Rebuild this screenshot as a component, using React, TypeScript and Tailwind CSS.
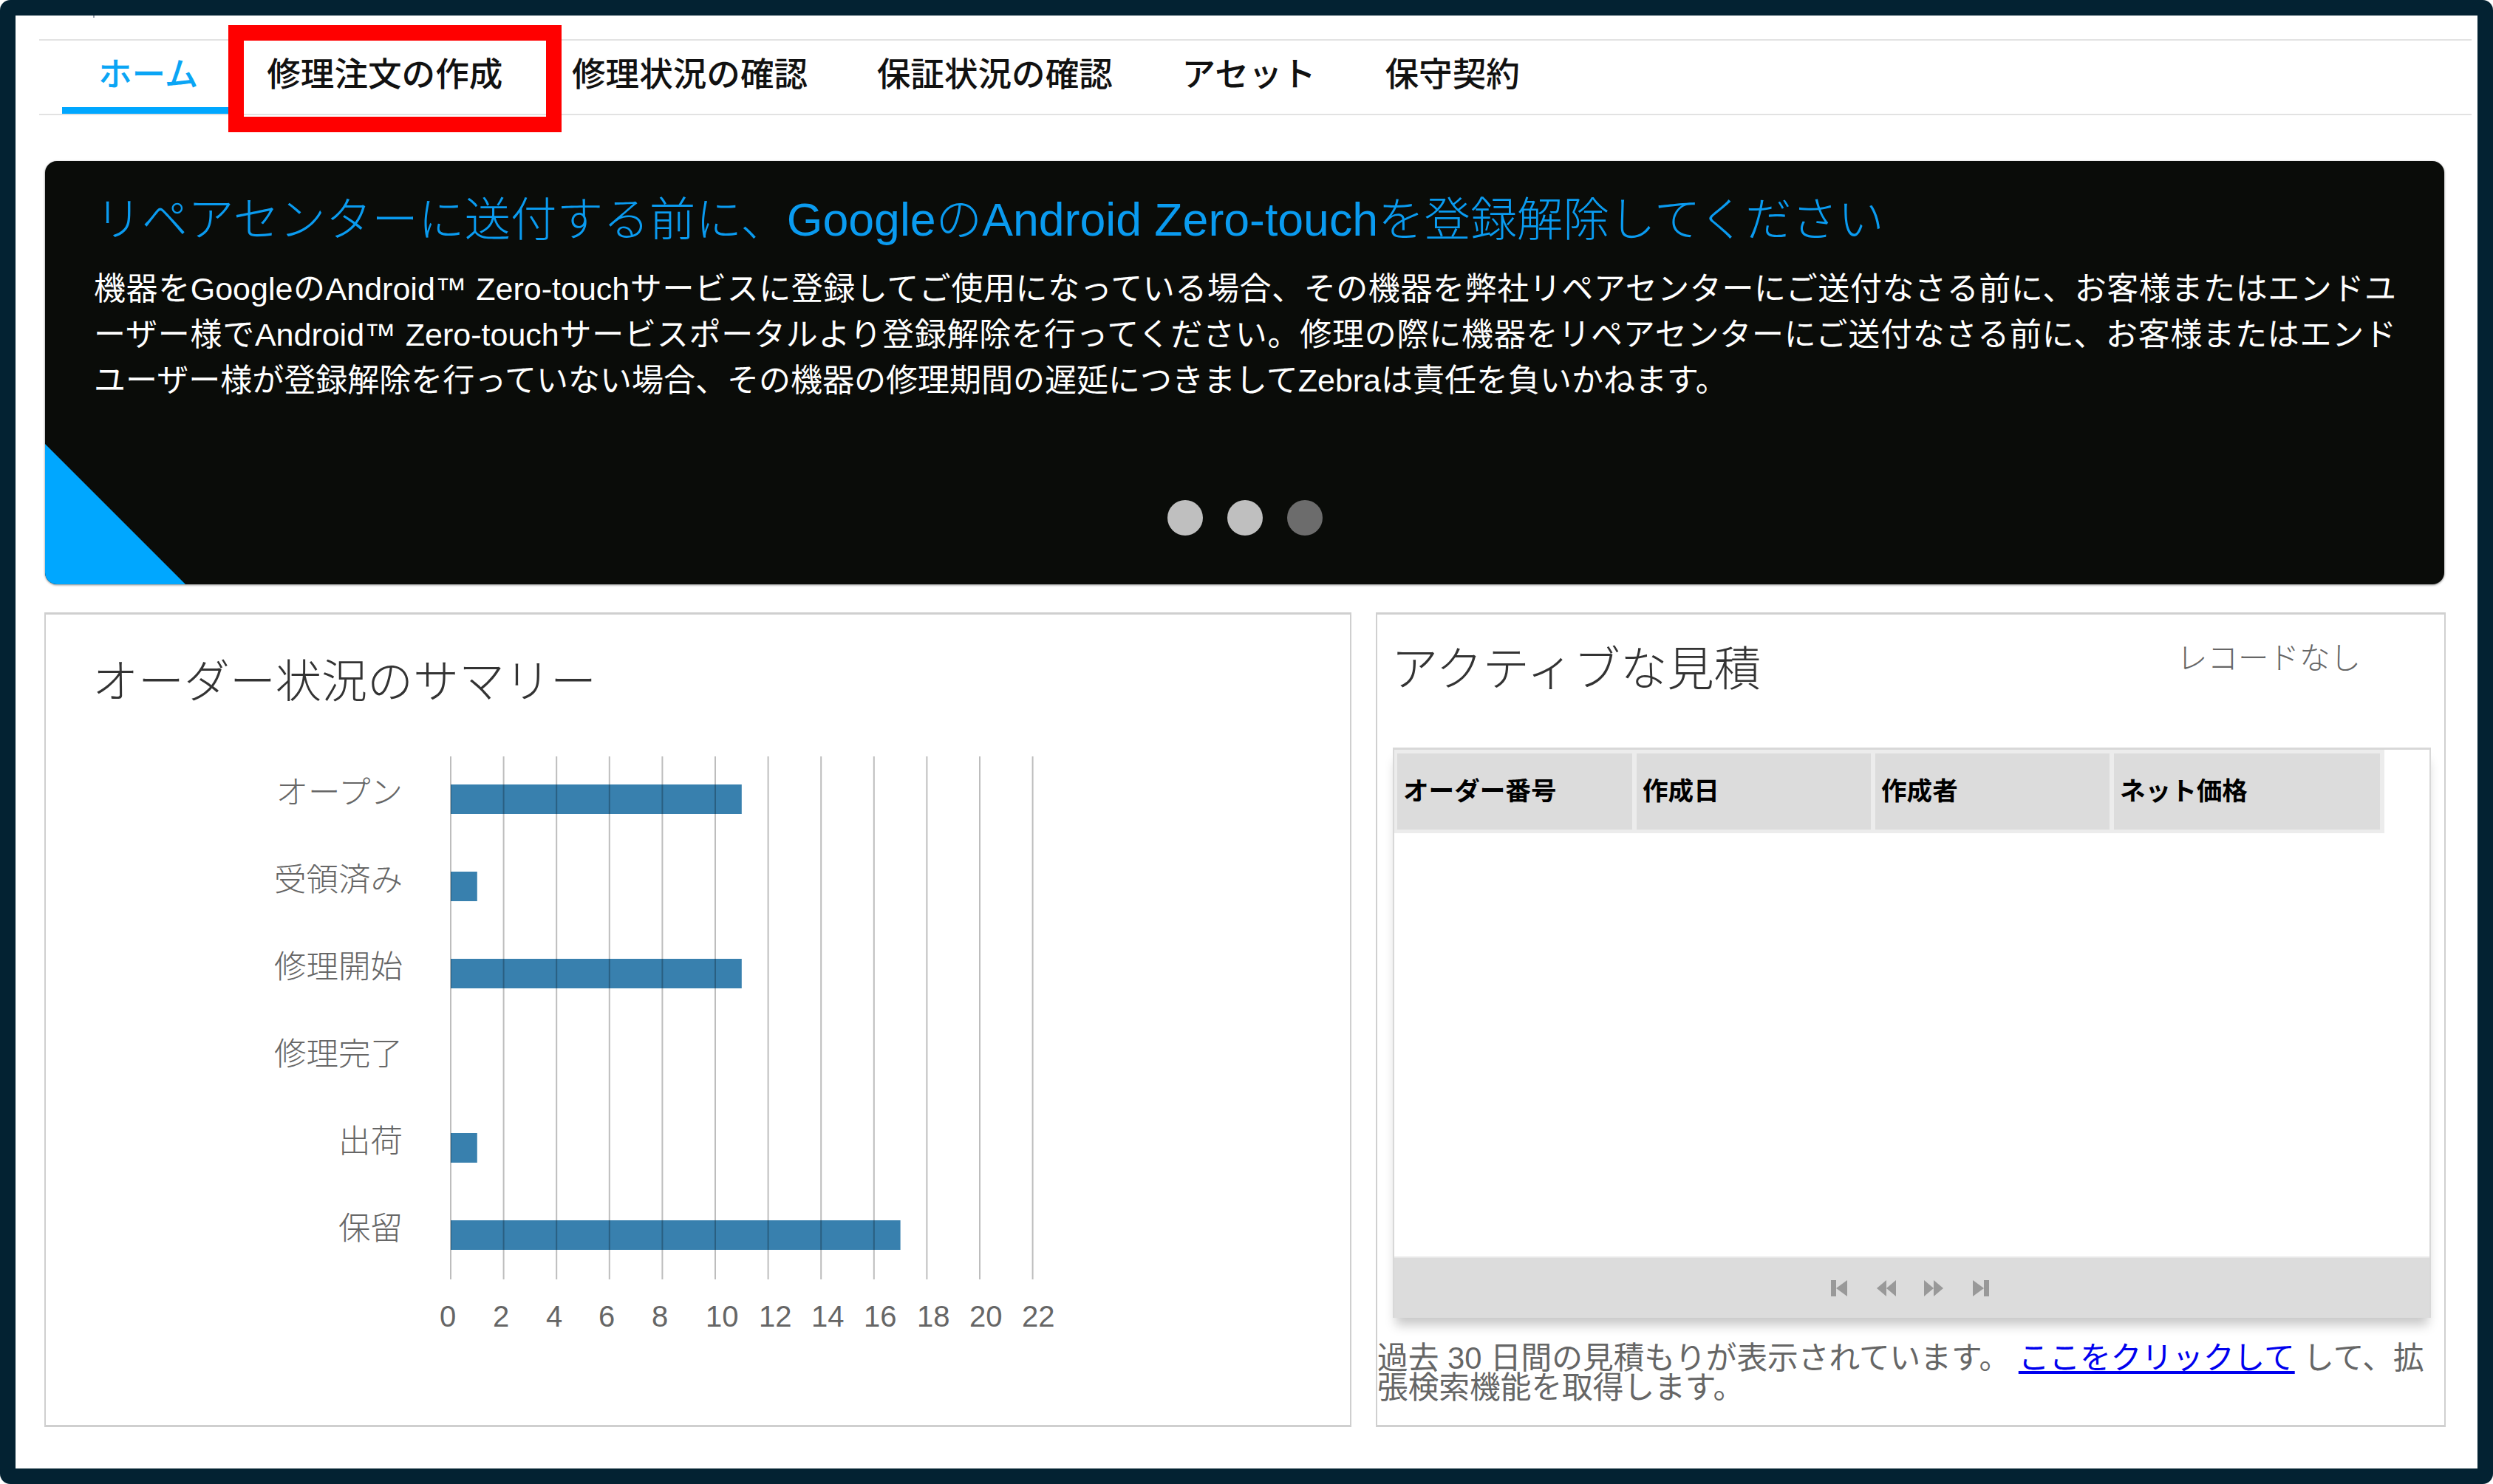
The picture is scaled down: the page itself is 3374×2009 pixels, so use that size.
const TABS = ['修理注文の作成', '修理状況の確認', '保証状況の確認', 'アセット', '保守契約']

const STATUS_ROWS = [
  { label: '\u30AA\u30FC\u30D7\u30F3', value: 11 },
  { label: '受領済み', value: 1 },
  { label: '修理開始', value: 11 },
  { label: '修理完了', value: 0 },
  { label: '出荷', value: 1 },
  { label: '保留', value: 17 },
]

const TICK_LABELS = [
  { t: 0, x: 533 }, { t: 2, x: 605 }, { t: 4, x: 677 }, { t: 6, x: 748 }, { t: 8, x: 820 }, { t: 10, x: 893 },
  { t: 12, x: 965 }, { t: 14, x: 1036 }, { t: 16, x: 1107 }, { t: 18, x: 1179 }, { t: 20, x: 1250 }, { t: 22, x: 1321 },
]

const COLUMNS = [
  { label: 'オーダー番号', w: 'w-[318px]' },
  { label: '作成日', w: 'w-[317px]' },
  { label: '作成者', w: 'w-[317px]' },
  { label: 'ネット価格', w: 'w-[360px]' },
]

function SummaryChart() {
  const x0 = 548
  const unit = 35.8
  return (
    <svg width="1420" height="800" className="block" fontFamily='"Liberation Sans","Noto Sans CJK JP",sans-serif'>
      {STATUS_ROWS.map((row, i) => (
        <g key={row.label}>
          <text x={483} y={64 + i * 118} textAnchor="end" fontSize={43.5} fontWeight={300} fill="#666">
            {row.label}
          </text>
          {row.value > 0 && <rect x={x0} y={38 + i * 118} width={row.value * unit} height={40} fill="#3880ae" />}
        </g>
      ))}
      {Array.from({ length: 12 }, (_, i) => (
        <rect key={i} x={x0 + i * 71.6 - 1} y={0} width={2} height={708} fill="#000" fillOpacity={0.26} />
      ))}
      {TICK_LABELS.map(tick => (
        <text key={tick.t} x={tick.x} y={772} fontSize={40} fill="#666">{tick.t}</text>
      ))}
    </svg>
  )
}

function PagerIcon({ kind }: { kind: 'first' | 'prev' | 'next' | 'last' }) {
  const flip = kind === 'next' || kind === 'last'
  return (
    <svg width="26" height="24" viewBox="0 0 26 24" fill="#999" className={flip ? '-scale-x-100 blur-[0.6px]' : 'blur-[0.6px]'}>
      {kind === 'first' || kind === 'last' ? (
        <path d="M2 1h7v22H2zM9 12 L24 1v22z" />
      ) : (
        <path d="M0 12 13 1v22zM13 12 26 1v22z" />
      )}
    </svg>
  )
}

export default function App() {
  return (
    <div className='h-[2009px] w-[3374px] bg-white font-["Liberation_Sans","Noto_Sans_CJK_JP",sans-serif]'>
      <div className="relative flex h-full flex-col rounded-[14px] border-[21px] border-[#032232] bg-white">
        <span className="absolute left-[105px] top-0 h-[3px] w-[2px] bg-gray-400" />

        <nav className="ml-[32px] mr-[8px] mt-[32px] flex h-[103px] shrink-0 items-stretch border-y-2 border-[#e2e2e2] text-[45.6px] text-[#111]">
          <a className="relative ml-[31px] flex items-center border-b-[9px] border-[#00a7ff] pl-[49px] pr-[46px] pt-[4px] font-medium text-[#0aa5f5]">
            ホーム
          </a>
          {TABS.map(tab => (
            <a key={tab} className="flex items-center px-[46.8px] pb-[5px] font-medium">{tab}</a>
          ))}
        </nav>

        {/* highlight drawn over the screenshot */}
        <div className="absolute left-[288px] top-[13px] h-[145px] w-[451px] border-[21px] border-[#ff0000]" />

        <section className="relative ml-[40px] mt-[62px] h-[573px] w-[3247px] shrink-0 overflow-hidden rounded-[16px] bg-[#0a0c09] pl-[66px] pt-[41px] shadow-[0_1px_3px_rgba(0,0,0,0.5)]">
          <div className="absolute bottom-0 left-0 h-[190px] w-[190px] bg-[#00a7ff] [clip-path:polygon(0_0,0_100%,100%_100%)]" />
          <h2 className="ml-[2px] whitespace-nowrap text-[62.6px] font-light leading-[76px] text-[#0a9bf0]">
            リペアセンターに送付する前に、GoogleのAndroid Zero-touchを登録解除してください
          </h2>
          <div className="mt-[25px] text-[43px] leading-[62px] text-white">
            <p className="w-[3116px] [text-align-last:justify]">機器をGoogleのAndroid™ Zero-touchサービスに登録してご使用になっている場合、その機器を弊社リペアセンターにご送付なさる前に、お客様またはエンドユ</p>
            <p className="w-[3116px] [text-align-last:justify]">ーザー様でAndroid™ Zero-touchサービスポータルより登録解除を行ってください。修理の際に機器をリペアセンターにご送付なさる前に、お客様またはエンド</p>
            <p className="whitespace-nowrap">ユーザー様が登録解除を行っていない場合、その機器の修理期間の遅延につきましてZebraは責任を負いかねます。</p>
          </div>
          <div className="absolute bottom-[66px] left-0 right-0 flex justify-center gap-[33px]">
            <span className="h-[48px] w-[48px] rounded-full bg-[#bfbfbf]" />
            <span className="h-[48px] w-[48px] rounded-full bg-[#bfbfbf]" />
            <span className="h-[48px] w-[48px] rounded-full bg-[#6c6c6c]" />
          </div>
        </section>

        <div className="ml-[39px] mt-[38px] flex h-[1103px] gap-[33px]">
          <section className="w-[1769px] border-x-2 border-b-[3px] border-t-[3px] border-[#cfcfcf]">
            <h2 className="ml-[63px] mt-[52px] text-[62px] font-light leading-[80px] text-[#333]">オーダー状況のサマリー</h2>
            <div className="mt-[60px]">
              <SummaryChart />
            </div>
          </section>

          <section className="w-[1448px] border-x-2 border-b-[3px] border-t-[3px] border-[#d0d0d0]">
            <div className="flex items-start justify-between pl-[19px] pr-[113px] pt-[34px]">
              <h2 className="text-[63.4px] font-light leading-[80px] text-[#333]">アクティブな見積</h2>
              <span className="mt-[-4px] text-[41.5px] font-light leading-[60px] text-[#666]">レコードなし</span>
            </div>

            <div className="ml-[21px] mt-[66px] flex h-[772px] w-[1405px] flex-col border-x-2 border-t-[3px] border-[#d8d8d8] shadow-[0_14px_14px_-4px_rgba(0,0,0,0.22)]">
              <div className="flex h-[113px] w-[1340px] shrink-0 items-center gap-[6px] bg-[#ececec] pl-[4px]">
                {COLUMNS.map(col => (
                  <div key={col.label} className={`flex h-[103px] items-center bg-[#dcdcdc] pl-[8px] text-[34.6px] font-bold text-black ${col.w}`}>
                    {col.label}
                  </div>
                ))}
              </div>
              <div className="flex-1 bg-white" />
              <div className="flex h-[83px] shrink-0 items-center justify-center gap-[38px] border-t-2 border-[#e8e8e8] bg-[#dcdcdc] pr-[6px]">
                <PagerIcon kind="first" />
                <PagerIcon kind="prev" />
                <PagerIcon kind="next" />
                <PagerIcon kind="last" />
              </div>
            </div>

            <div className="mt-[35px] text-[41.7px] leading-[40px] text-[#666]">
              <p className="whitespace-nowrap">
                過去 30 日間の見積もりが表示されています。{' '}
                <a className="text-[#0000ee] underline">ここをクリックして</a> して、拡
              </p>
              <p className="whitespace-nowrap">張検索機能を取得します。</p>
            </div>
          </section>
        </div>
      </div>
    </div>
  )
}
